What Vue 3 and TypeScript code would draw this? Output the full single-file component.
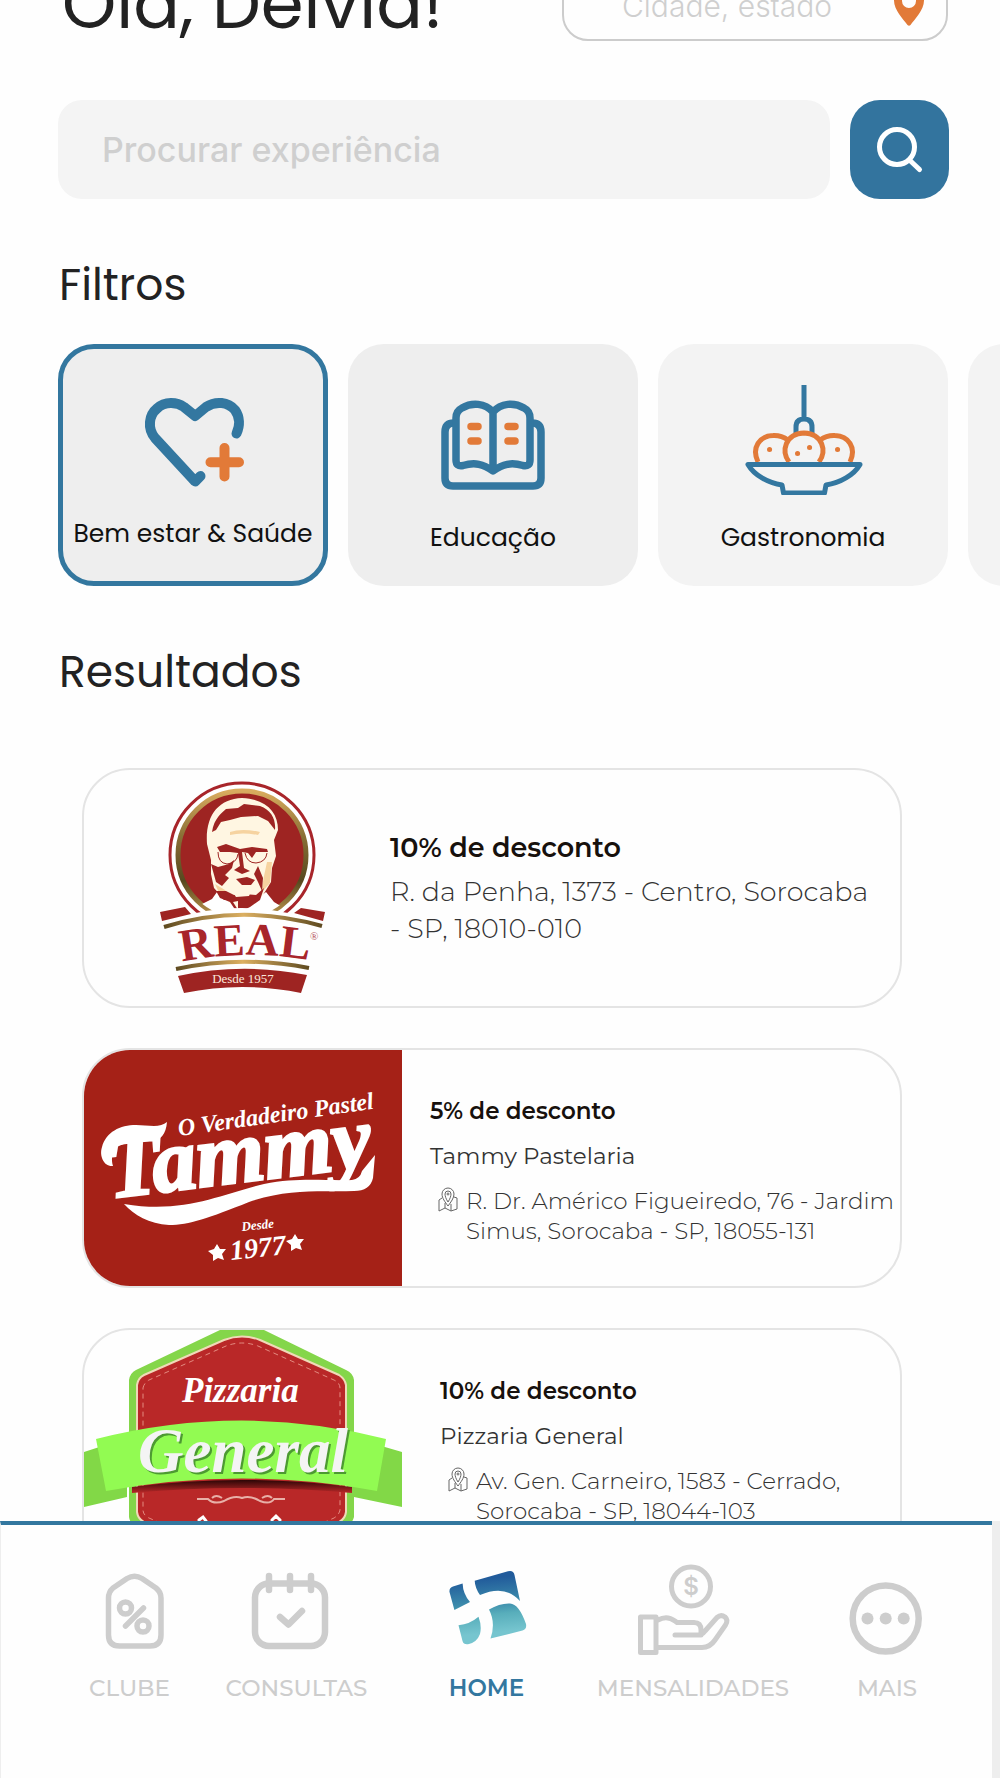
<script setup lang="ts">
import { ref } from 'vue'

type FilterId = 'health' | 'education' | 'food' | 'more'
type LogoId = 'real' | 'tammy' | 'general'
type TabId = 'clube' | 'consultas' | 'home' | 'mensalidades' | 'mais'

interface Filter { id: FilterId; label: string }
interface Partner { id: LogoId; discount: string; name?: string; address: string }
interface Tab { id: TabId; label: string }

const filters: Filter[] = [
  { id: 'health', label: 'Bem estar & Saúde' },
  { id: 'education', label: 'Educação' },
  { id: 'food', label: 'Gastronomia' },
  { id: 'more', label: '' },
]

const partners: Partner[] = [
  { id: 'real', discount: '10% de desconto', address: 'R. da Penha, 1373 - Centro, Sorocaba - SP, 18010-010' },
  { id: 'tammy', discount: '5% de desconto', name: 'Tammy Pastelaria', address: 'R. Dr. Américo Figueiredo, 76 - Jardim Simus, Sorocaba - SP, 18055-131' },
  { id: 'general', discount: '10% de desconto', name: 'Pizzaria General', address: 'Av. Gen. Carneiro, 1583 - Cerrado, Sorocaba - SP, 18044-103' },
]

const tabs: Tab[] = [
  { id: 'clube', label: 'CLUBE' },
  { id: 'consultas', label: 'CONSULTAS' },
  { id: 'home', label: 'HOME' },
  { id: 'mensalidades', label: 'MENSALIDADES' },
  { id: 'mais', label: 'MAIS' },
]

const selected = ref<FilterId>('health')
const activeTab = ref<TabId>('home')
const city = ref('')
const query = ref('')
</script>

<template>
  <div class="app">
    <main class="content">
      <header class="top">
        <h1 class="greeting">Olá, Delvia!</h1>
        <div class="city">
          <input v-model="city" class="city-input" type="text" placeholder="Cidade, estado" aria-label="Cidade, estado" />
          <svg class="pin" viewBox="0 0 30 40" aria-hidden="true">
            <path fill="#e27a38" fill-rule="evenodd" d="M15 0C6.700 0 0 6.500 0 14.500C0 24 9 33 13.500 39Q15 40.500 16.500 39C21 33 30 24 30 14.500C30 6.500 23.300 0 15 0ZM15 8a7 7 0 1 1 0 14a7 7 0 0 1 0-14Z" />
          </svg>
        </div>
      </header>

      <form class="search" role="search" @submit.prevent>
        <input v-model="query" class="search-input" type="text" placeholder="Procurar experiência" aria-label="Procurar experiência" />
        <button class="search-button" type="submit" aria-label="Procurar">
          <svg viewBox="0 0 48 48" aria-hidden="true" fill="none" stroke="#fff" stroke-width="5" stroke-linecap="round">
            <circle cx="21" cy="21" r="17.500" />
            <path d="M34 34.500L43.500 43.500" />
          </svg>
        </button>
      </form>

      <h2 class="heading">Filtros</h2>
      <div class="filters">
        <button
          v-for="f in filters"
          :key="f.id"
          type="button"
          class="filter"
          :class="[f.id, { selected: selected === f.id }]"
          :aria-pressed="selected === f.id"
          :aria-label="f.label || 'Mais filtros'"
          @click="selected = f.id"
        >
          <svg v-if="f.id === 'health'" class="filter-icon" viewBox="0 0 120 110" fill="none" stroke-linecap="round" stroke-linejoin="round" stroke-width="10" aria-hidden="true">
            <path stroke="#3377a0" d="M67.500 95L62.200 100.500L22 57C14 47 16 34 24 27.500C32 20 44 21 51 26L62.200 35L73 26C83 19.500 95 21 102 29C107 36 107 45 103.500 52.500" />
            <path stroke="#e27a38" d="M91.500 67V95.500M77.500 81.300H106" />
          </svg>
          <svg v-else-if="f.id === 'education'" class="filter-icon" viewBox="0 0 120 110" fill="none" stroke="#3377a0" stroke-linejoin="round" stroke-width="7.500" aria-hidden="true">
            <path d="M21 38Q12 38 12 47V93Q12 101 20 101H100Q108 101 108 93V47Q108 38 99 38" />
            <path d="M60 27C52 18 39 17 29 23Q23 26 23 33V75Q23 82 30 80.500C42 77 50 79 60 86C70 79 78 77 90 80.500Q97 82 97 75V33Q97 26 91 23C81 17 68 18 60 27ZM60 27V86" />
            <path stroke="#e27a38" stroke-linecap="round" d="M38 41.500H45M38 56H45M75 41.500H82M75 56H82" />
          </svg>
          <svg v-else-if="f.id === 'food'" class="filter-icon" viewBox="0 0 120 110" fill="none" stroke="#3377a0" stroke-linejoin="round" stroke-width="5" aria-hidden="true">
            <path d="M61 0V34M53 48V42Q53 34 61 34Q69 34 69 42V48" />
            <g stroke="#e27a38">
              <path d="M15 77C8 62 17 51 30 50.500Q38 50 45 55M107 77C114 62 105 51 92 50.500Q84 50 77 55" />
              <path d="M46 77C38 66 42 49 61 48C80 49 84 66 76 77" />
              <path stroke-linecap="round" d="M26.500 64.500H26.600M54.500 68.500H54.600M66.500 62.500H66.600M94.500 64.500H94.600" />
            </g>
            <path d="M5 79.500H117C111 90 97 98 83 100L81.500 108H40.500L39 100C25 98 11 90 5 79.500Z" />
          </svg>
          <span v-if="f.label" class="filter-label">{{ f.label }}</span>
        </button>
      </div>

      <h2 class="heading">Resultados</h2>
      <ul class="results">
        <li v-for="p in partners" :key="p.id" class="card" :class="p.id">
          <svg v-if="p.id === 'real'" class="logo narrow" viewBox="0 0 280 236" role="img" aria-label="Real">
            <defs>
              <linearGradient id="gold"><stop offset="0" stop-color="#5e4a20" /><stop offset=".5" stop-color="#dcb062" /><stop offset="1" stop-color="#5e4a20" /></linearGradient>
              <linearGradient id="goldRing" x1="0" y1="0" x2="0" y2="1"><stop offset="0" stop-color="#d9ac5f" /><stop offset=".35" stop-color="#8a7036" /><stop offset=".7" stop-color="#57481f" /><stop offset="1" stop-color="#c39a50" /></linearGradient>
              <path id="realArc" d="M98 192Q163 178 236 192" />
              <clipPath id="disc"><circle cx="158" cy="85" r="63" /></clipPath>
            </defs>
            <circle cx="158" cy="85" r="72" fill="#fff" stroke="#a8252a" stroke-width="3" />
            <circle cx="158" cy="85" r="64" fill="#9e2422" stroke="url(#goldRing)" stroke-width="5" />
            <g clip-path="url(#disc)">
              <path fill="#fff" d="M108 148L118 134L128 129L133 122L140 130L174 128L182 122L190 132L200 138L208 150H108Z" />
              <path fill="#fff6e2" d="M127 90L123 74C121 46 134 29 158 28C182 29 194 42 194 60L190 70L192 86L188 98L187 112L179 125L168 136L150 136L138 127L130 118L127 104Z" />
              <path fill="#9e2422" d="M128 62C130 48 138 43 142 39L154 38L160 34L176 36C187 40 192 49 191 60L184 51L174 46L157 47L146 50L137 52L132 60Z" />
              <path fill="#f6d3a0" d="M131 114L141 120L148 131L137 127ZM183 92L188 92L186 113L177 123L180 106ZM146 62Q158 58 176 62L174 65Q158 62 146 65Z" />
              <path fill="#9e2422" d="M133 77L142 74L156 79L168 77L183 79L184 82L172 82L168 88L164 83L158 82L160 98L166 101L158 104L150 100L156 96L154 83L146 82L136 82Z" />
              <path fill="#9e2422" d="M127 94L134 97L145 94L150 90L148 98L141 105L145 108L138 116L132 112ZM152 109L163 107L171 110L167 115L158 115ZM174 96L179 108L178 121L174 112L170 104Z" />
              <path fill="#9e2422" d="M132 121L142 121L150 125L160 124L172 125L180 118L176 130L166 137L158 141L152 141L146 132L136 128Z" />
              <path fill="#fff6e2" d="M146 118L156 121L168 119L165 126L152 127ZM149 132L154 131V140Z" />
              <path fill="none" stroke="#9e2422" d="M134 82Q134 93 143 94Q153 93 154 84M161 83Q163 93 172 93Q182 92 183 83" />
            </g>
            <path fill="#fff" d="M104 160L112 143Q158 133 204 143L213 160Z" />
            <path fill="#9e2422" d="M76 142L101 137L107 144L78 151ZM241 142L217 138L210 143L239 151Z" />
            <path fill="none" stroke="url(#gold)" stroke-width="4" d="M80 157Q158 133 238 156" />
            <text fill="#a8252a" font-family="'Liberation Serif', serif" font-size="46" font-weight="700"><textPath href="#realArc">REAL</textPath></text>
            <text x="226" y="170" fill="#b5545a" font-family="'Liberation Serif', serif" font-size="11">®</text>
            <path fill="none" stroke="url(#gold)" stroke-width="4" d="M92 199Q158 185 225 198" />
            <path fill="#9e2422" d="M94 206Q158 192 223 205L217 223Q158 211 100 223Z" />
            <text x="159" y="213" text-anchor="middle" fill="#fbe9dc" font-family="'Liberation Serif', serif" font-size="13">Desde 1957</text>
          </svg>

          <svg v-else-if="p.id === 'tammy'" class="logo" viewBox="0 0 318 236" role="img" aria-label="O Verdadeiro Pastel Tammy">
            <rect width="318" height="236" fill="#a52117" />
            <g fill="#fff" font-family="'Liberation Serif', serif" font-weight="700" font-style="italic">
              <text x="95" y="86" font-size="24" transform="rotate(-8 95 86)">O Verdadeiro Pastel</text>
              <text x="26" y="148" font-size="88" stroke="#fff" stroke-width="3" transform="rotate(-7 26 148)">Tammy</text>
              <text x="158" y="181" font-size="13" transform="rotate(-6 158 181)">Desde</text>
              <text x="147" y="210" font-size="28" transform="rotate(-6 147 210)">1977</text>
            </g>
            <path fill="#fff" d="M83 72C82 84 77 91 66 91L44 93C30 95 26 104 29 116C20 117 15 106 18 97C22 82 36 75 52 75L70 76Q78 76 83 72Z" />
            <path fill="#fff" d="M40 154C100 164 135 145 180 134C215 127 240 131 268 130Q276 129 278 121L291 105L289 128Q286 141 270 141C235 142 205 138 165 152C125 168 105 175 85 175C65 174 50 165 40 154Z" />
            <path fill="#fff" d="M133 194l3 5 6 0-4 5 2 6-6-2-5 3 0-6-5-4 6-2zM211 184l3 5 6 0-4 5 2 6-6-2-5 3 0-6-5-4 6-2z" />
          </svg>

          <svg v-else class="logo" viewBox="0 0 318 236" role="img" aria-label="Pizzaria General">
            <defs>
              <linearGradient id="ribbonShade" x1="0" y1="0" x2="0" y2="1"><stop offset="0" stop-color="#2c0606" /><stop offset="1" stop-color="#b92828" /></linearGradient>
            </defs>
            <path fill="#84d64a" d="M45 50Q46 43 52 40L136 0H180L262 40Q269 43 270 50V187Q268 194 262 197L180 236H136L53 197Q46 194 45 187Z" />
            <path fill="#b92828" stroke="#f0d9b8" stroke-width="2" d="M53 55Q54 48 60 45L140 10Q158 3 176 10L255 45Q261 49 262 55V182Q261 189 255 192L176 229Q158 236 140 229L60 192Q54 189 53 182Z" />
            <path fill="none" stroke="#e38b80" stroke-dasharray="5 4" d="M59 58Q60 53 65 50L142 16Q158 10 174 16L250 50Q256 53 256 58V180Q255 185 250 188L174 222Q158 228 142 222L65 188Q59 185 59 180Z" />
            <path fill="#82d847" d="M0 122L43 108V167L0 177ZM318 122L270 108V167L318 177Z" />
            <path fill="url(#ribbonShade)" d="M48 157Q158 143 268 157V163Q158 153 48 163Z" />
            <path fill="#92fb52" d="M12 109Q158 72 302 109L293 161Q158 136 22 161Z" />
            <g font-family="'Liberation Serif', serif" font-weight="700" font-style="italic">
              <text x="98" y="72" font-size="35" fill="#fff">Pizzaria</text>
              <text x="56" y="144" font-size="63" fill="#4d9a32" aria-hidden="true">General</text>
              <text x="54" y="142" font-size="63" fill="#f4f4f4">General</text>
            </g>
            <path fill="none" stroke="#e8b0a8" stroke-width="2" d="M113 169H124Q130 175 140 171Q150 165 158 168Q166 165 176 171Q186 175 190 169H201M128 168Q132 164 138 168M178 168Q184 164 188 168" />
            <path fill="none" stroke="#fff" stroke-width="3" stroke-linecap="round" d="M115 190l4-3 3 4M188 190l4-4 4 4" />
          </svg>

          <div class="info">
            <strong class="discount">{{ p.discount }}</strong>
            <span v-if="p.name" class="name">{{ p.name }}</span>
            <address class="address">
              <svg v-if="p.name" class="map-pin" viewBox="0 0 20 26" fill="none" stroke="#666" aria-hidden="true">
                <path d="M10 20C7 16 4 12 4 8A6 6 0 0 1 16 8C16 12 13 16 10 20ZM10 16C8 13 7 10 7 8A3 3 0 0 1 13 8C13 10 12 13 10 16Z" />
                <circle cx="10" cy="8" r="1" />
                <path d="M4 12L1 14V25L7 22L13 25L19 23V12L16 11M7 22V17M13 25V18" />
              </svg>
              <span>{{ p.address }}</span>
            </address>
          </div>
        </li>
      </ul>
    </main>

    <div class="nav-bar">
      <nav class="tabs" aria-label="Principal">
        <a v-for="t in tabs" :key="t.id" href="#" class="tab" :class="{ active: activeTab === t.id }" :aria-current="activeTab === t.id ? 'page' : undefined" @click.prevent="activeTab = t.id">
          <svg class="tab-icon" viewBox="0 0 96 92" fill="none" stroke="#cdcdcd" stroke-linecap="round" stroke-linejoin="round" aria-hidden="true">
            <g v-if="t.id === 'clube'" stroke-width="5.500">
              <path d="M26.500 34Q26.500 28 31 24L45 14.500Q52.500 10 60 14.500L74 24Q79 28 79 34V71Q79 82 68 82H37.500Q26.500 82 26.500 71Z" />
              <circle cx="43.500" cy="44" r="6" /><circle cx="61" cy="62" r="6" /><path d="M61.500 44L43.500 62" />
            </g>
            <g v-else-if="t.id === 'consultas'" stroke-width="6.500">
              <rect x="6" y="19.500" width="70" height="62.500" rx="14" />
              <path d="M20 12V26M41 12V26M62 12V26M31 53L39.500 60.500L53 47" />
            </g>
            <g v-else-if="t.id === 'home'" stroke="none">
              <defs><linearGradient id="brand" gradientUnits="userSpaceOnUse" x1="45" y1="7" x2="52" y2="80"><stop offset=".1" stop-color="#215b9b" /><stop offset=".45" stop-color="#3d8dac" /><stop offset=".6" stop-color="#58aebb" /><stop offset=".85" stop-color="#76c5cf" /></linearGradient></defs>
              <path fill="url(#brand)" d="M10.500 28Q10 24 14 22.500L23.600 19.500Q24 30 31 38L15.400 46ZM35.700 16.700L69 7.300Q74.500 6 75.500 11L81 37Q66 20 41 31Q36 24 35.700 16.700ZM19.500 61.300Q31 60 39.500 52.700Q43 62 41 70Q38 78 30 80Q24.500 81 23.500 77ZM50 45.500Q61 39 71 39.500Q80 40 87 60Q88 65 83.500 66.500L51.500 74.500Q57 59 50 45.500Z" />
            </g>
            <g v-else-if="t.id === 'mensalidades'" stroke-width="5">
              <circle cx="46" cy="22.500" r="19.500" />
              <text x="46" y="31" text-anchor="middle" fill="#cdcdcd" stroke="none" font-family="Inter, sans-serif" font-size="24" font-weight="600">$</text>
              <path d="M-4.500 53H11V88.500H-4.500ZM13 56Q22 51 30 57L32 58.500H49Q56 58.500 56 66V71M30 71H53Q57 71 60 67L72 53.500Q76 50 80 53Q83.500 56 80.500 61L70 76Q65 83.500 57 83.500H13" />
            </g>
            <g v-else>
              <circle cx="46.700" cy="54.500" r="33" stroke-width="6.500" />
              <g fill="#cdcdcd" stroke="none"><circle cx="28.500" cy="54.500" r="6" /><circle cx="46.700" cy="54.500" r="6" /><circle cx="64.700" cy="54.500" r="6" /></g>
            </g>
          </svg>
          <span class="tab-label">{{ t.label }}</span>
        </a>
      </nav>
    </div>
  </div>
</template>

<style>
body {
  background: #fefefe;
}
</style>

<style scoped>
* {
  box-sizing: border-box;
}

.app {
  display: flex;
  flex-direction: column;
  height: 100vh;
  overflow: hidden;
  font-family: Poppins, Inter, sans-serif;
  color: #222;
}

.content {
  flex: 1;
  min-height: 0;
  overflow-x: hidden;
  overflow-y: auto;
  scrollbar-width: none;
}

/* the header sits partly scrolled under the top edge */
.top {
  display: flex;
  align-items: flex-end;
  justify-content: space-between;
  margin-top: -33px;
  padding: 0 52px 0 62px;
}

.greeting {
  margin: 0;
  font-size: 69px;
  font-weight: 400;
  line-height: 74px;
}

.city {
  display: flex;
  align-items: center;
  width: 386px;
  height: 70px;
  padding: 0 22px 0 58px;
  border: 2px solid #ccc;
  border-radius: 26px;
}

.city-input {
  flex: 1;
  min-width: 0;
  padding: 0;
  border: 0;
  background: none;
  font: 300 30px Inter, sans-serif;
}

.city-input::placeholder,
.search-input::placeholder {
  color: #cfcfcf;
  opacity: 1;
}

.pin {
  width: 30px;
  height: 40px;
}

.search {
  display: flex;
  gap: 20px;
  margin: 59px 51px 0 58px;
}

.search-input {
  flex: 1;
  min-width: 0;
  height: 99px;
  padding: 0 44px;
  border: 0;
  border-radius: 24px;
  background: #f4f4f4;
  font: 400 34px Inter, sans-serif;
}

.search-input::placeholder {
  font-weight: 500;
}

.search-button {
  display: flex;
  align-items: center;
  justify-content: center;
  width: 99px;
  height: 99px;
  padding: 0;
  border: 0;
  border-radius: 30px;
  background: #33749e;
}

.search-button svg {
  width: 48px;
  height: 48px;
}

.heading {
  margin: 60px 60px 0 59px;
  font-size: 44px;
  font-weight: 400;
  line-height: 52px;
}

.filters {
  display: flex;
  gap: 20px;
  margin-top: 33px;
  padding-left: 58px;
  overflow: hidden;
}

.filter {
  display: flex;
  flex: 0 0 290px;
  flex-direction: column;
  align-items: center;
  justify-content: center;
  gap: 28px;
  height: 242px;
  padding: 8px 0 0;
  border: 0;
  border-radius: 36px;
  background: #f3f3f3;
  color: #111;
  font: 400 25px/30px Poppins, Inter, sans-serif;
}

.filter.education {
  background: #eee;
}

.filter.selected {
  flex-basis: 270px;
  padding: 0;
  border: 5px solid #33779f;
  background: #eee;
}

.filter-icon {
  flex: none;
  width: 120px;
  height: 110px;
}

.results {
  display: flex;
  flex-direction: column;
  gap: 40px;
  margin: 70px 98px 0 82px;
  padding: 0 0 40px;
  list-style: none;
}

.card {
  display: flex;
  align-items: center;
  gap: 28px;
  height: 240px;
  overflow: hidden;
  border: 2px solid #e4e4e4;
  border-radius: 48px;
}

.card.general {
  gap: 38px;
}

.logo {
  flex: none;
  width: 318px;
  height: 236px;
}

.logo.narrow {
  width: 280px;
}

.info {
  display: flex;
  flex: 1;
  flex-direction: column;
  gap: 15px;
  min-width: 0;
  padding-top: 6px;
  font-family: Montserrat, Inter, sans-serif;
  font-size: 23px;
  line-height: 30px;
}

.discount {
  color: #17110d;
  font-weight: 600;
}

.name {
  color: #333;
}

.address {
  display: flex;
  align-items: flex-start;
  gap: 8px;
  padding-left: 8px;
  color: #333;
  font-style: normal;
  font-weight: 300;
}

.map-pin {
  flex: none;
  width: 20px;
  height: 26px;
}

.card.real {
  gap: 26px;
}

.card.real .info {
  gap: 7px;
  padding: 0 16px 0 0;
  font-size: 27px;
  line-height: 37px;
}

.card.real .address {
  padding: 0;
}

.nav-bar {
  flex: none;
  padding-right: 8px;
  background: #eee;
}

.tabs {
  display: grid;
  grid-template-columns: 167fr 167fr 213fr 200fr 188fr;
  padding: 39px 11px 75px 45px;
  border-top: 4px solid #33779f;
  border-left: 1px solid #eee;
  background: #fefefe;
}

.tab {
  display: flex;
  flex-direction: column;
  align-items: center;
  gap: 17px;
  color: #cdcdcd;
  text-decoration: none;
}

.tab-icon {
  width: 96px;
  height: 92px;
  overflow: visible;
}

.tab-label {
  font: 500 23px/30px Montserrat, Inter, sans-serif;
}

.tab.active .tab-label {
  color: #33779f;
  font-weight: 600;
}
</style>
